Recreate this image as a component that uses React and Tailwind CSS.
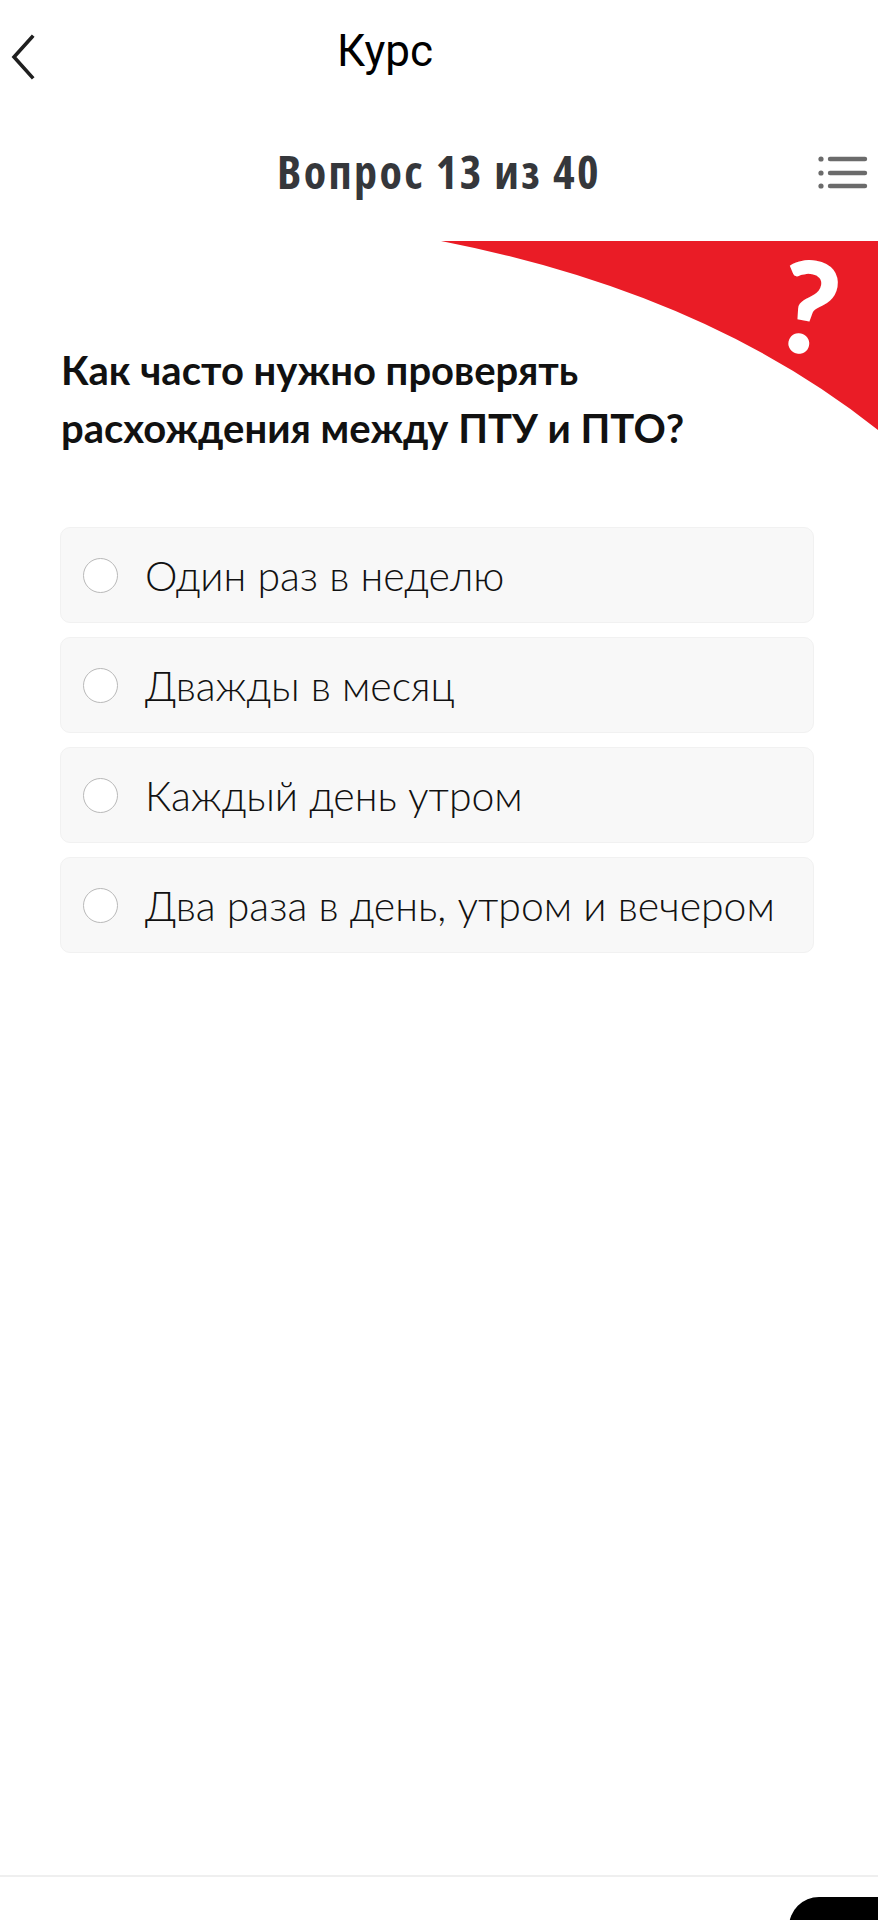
import React from "react";

const options = [
  "Один раз в неделю",
  "Дважды в месяц",
  "Каждый день утром",
  "Два раза в день, утром и вечером",
];

function BackIcon() {
  return (
    <svg width="30" height="46" viewBox="0 0 30 46" fill="none">
      <path d="M22 3 L4 23 L22 43" stroke="#1f1f1f" strokeWidth="3.6" strokeLinecap="square" strokeLinejoin="miter" />
    </svg>
  );
}

function ListIcon() {
  return (
    <svg width="52" height="36" viewBox="0 0 52 36" fill="none">
      {[4, 18, 31].map((y) => (
        <g key={y}>
          <circle cx="4" cy={y} r="2.6" fill="#6b6b6b" />
          <line x1="13" y1={y} x2="48" y2={y} stroke="#6b6b6b" strokeWidth="4.4" strokeLinecap="round" />
        </g>
      ))}
    </svg>
  );
}

function RedCorner() {
  return (
    <div className="absolute top-0 right-0 w-[437px] h-[190px] pointer-events-none">
      <svg width="437" height="190" viewBox="0 0 437 190" className="absolute inset-0">
        <path d="M0 0 L437 0 L437 189 Q265 52 0 0 Z" fill="#ea1c26" />
      </svg>
      <span
        className="absolute left-[338px] top-[0px] text-white text-[128px] leading-none font-black rotate-[10deg]"
        style={{ fontFamily: "Lato, 'Open Sans', sans-serif" }}
      >
        ?
      </span>
    </div>
  );
}

function Option({ label }) {
  return (
    <div className="h-[96px] rounded-[10px] bg-[#f8f8f8] border border-[#f1f1f1] flex items-center pl-[22px]">
      <div className="w-[35px] h-[35px] rounded-full border-[1.5px] border-[#b9b9b9] bg-white shrink-0" />
      <span className="ml-[27px] text-[41px] leading-none font-light text-[#111] whitespace-nowrap">{label}</span>
    </div>
  );
}

export default function App() {
  return (
    <div className="h-[1920px] w-full overflow-hidden bg-white flex flex-col relative">
      {/* top bar */}
      <div className="h-[110px] flex items-center shrink-0">
        <div className="w-[50px] pl-[10px] pt-[4px] flex items-center">
          <BackIcon />
        </div>
        <div
          className="ml-[287px] text-[44px] text-black leading-none -mt-[8px]"
          style={{ fontFamily: "Roboto, 'Liberation Sans', sans-serif" }}
        >
          Курс
        </div>
      </div>

      {/* question counter */}
      <div className="h-[131px] grid grid-cols-[1fr_auto_1fr] items-center shrink-0">
        <div />
        <div
          className="text-[46px] font-bold text-[#35373b] font-stretch-condensed tracking-[2.4px] leading-none -mt-[10px]"
          style={{ fontFamily: "'Open Sans', sans-serif" }}
        >
          Вопрос 13 из 40
        </div>
        <div className="flex justify-end pr-[9px] -mt-[6px]">
          <ListIcon />
        </div>
      </div>

      {/* question */}
      <div className="relative" style={{ fontFamily: "Lato, 'Open Sans', sans-serif" }}>
        <RedCorner />
        <h1 className="relative pt-[100px] pl-[61px] text-[40px] leading-[58px] font-bold text-[#111]">
          Как часто нужно проверять
          <br />
          расхождения между ПТУ и ПТО?
        </h1>

        <div className="mt-[70px] mx-[60px] w-[754px] flex flex-col gap-[14px]">
          {options.map((o) => (
            <Option key={o} label={o} />
          ))}
        </div>
      </div>

      <div className="flex-1" />

      {/* bottom bar */}
      <div className="h-[45px] border-t-2 border-[#efefef] shrink-0 flex justify-end pt-[20px]">
        <div className="w-[89px] h-[60px] bg-black rounded-l-[34px]" />
      </div>
    </div>
  );
}
